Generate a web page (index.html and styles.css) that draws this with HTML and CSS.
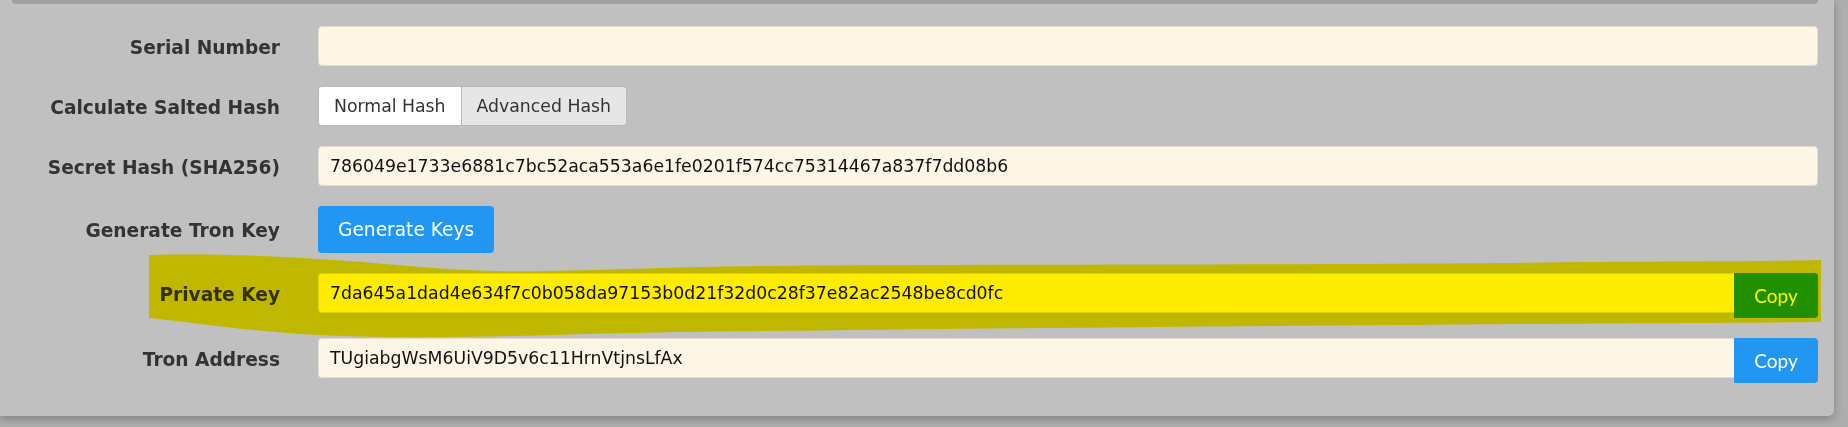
FILE: index.html
```html
<!DOCTYPE html>
<html lang="en">
<head>
  <meta charset="UTF-8" />
  <title>Tron Key Generator</title>
  <link rel="stylesheet" href="styles.css">
</head>
<body>
  <div class="panel">
    <div class="panel-top"></div>

    <div class="form">
      <label class="label">Serial Number</label>
      <input class="field" type="text" value="">

      <label class="label">Calculate Salted Hash</label>
      <div class="btn-group">
        <button class="seg active">Normal Hash</button>
        <button class="seg">Advanced Hash</button>
      </div>

      <label class="label">Secret Hash (SHA256)</label>
      <input class="field" type="text" value="786049e1733e6881c7bc52aca553a6e1fe0201f574cc75314467a837f7dd08b6">

      <label class="label label-btn">Generate Tron Key</label>
      <button class="btn-primary">Generate Keys</button>

      <label class="label">Private Key</label>
      <div class="input-group">
        <input class="field" type="text" value="7da645a1dad4e634f7c0b058da97153b0d21f32d0c28f37e82ac2548be8cd0fc">
        <button class="btn-copy">Copy</button>
      </div>

      <label class="label">Tron Address</label>
      <div class="input-group">
        <input class="field" type="text" value="TUgiabgWsM6UiV9D5v6c11HrnVtjnsLfAx">
        <button class="btn-copy">Copy</button>
      </div>
    </div>
  </div>

  <!-- marker highlight drawn over the private key row -->
  <svg class="marker" width="1848" height="427" viewBox="0 0 1848 427">
    <path d="M149,255 C240,253 320,258 420,267 C520,276 600,268 760,266 C1000,264 1300,265 1500,263 C1650,261 1740,262 1821,260 L1821,322 C1740,323 1600,323 1400,325 C1100,327 850,330 680,332 C520,335 420,341 300,334 C230,329 190,322 149,318 Z" />
  </svg>
</body>
</html>
```

FILE: styles.css
```css
body {
  margin: 0;
  background: #adadad;
  font-family: "DejaVu Sans", Verdana, sans-serif;
  height: 427px;
  overflow: hidden;
  position: relative;
}

.panel {
  width: 1834px;
  box-sizing: border-box;
  padding: 0 16px 33px 12px;
  background: #c0c0c0;
  border-radius: 0 0 6px 0;
  box-shadow: 0 3px 8px rgba(0, 0, 0, 0.25);
}

.panel-top {
  height: 4px;
  margin-bottom: 22px;
  background: #a0a0a0;
  border-radius: 0 0 6px 6px;
}

.form {
  display: grid;
  grid-template-columns: 268px 1fr;
  column-gap: 38px;
  row-gap: 20px;
  align-items: start;
}

.label {
  height: 40px;
  text-align: right;
  font-weight: bold;
  font-size: 18.6px;
  line-height: 43px;
  color: #333;
}

.label-btn {
  height: 47px;
  line-height: 49px;
}

.field {
  box-sizing: border-box;
  width: 100%;
  height: 40px;
  margin: 0;
  padding: 0 11px;
  font-family: "DejaVu Sans", Verdana, sans-serif;
  font-size: 17.3px;
  color: #111;
  background: #fdf6e7;
  border: 1px solid #e2dccf;
  border-radius: 4px;
  outline: none;
}

.btn-group {
  display: flex;
  justify-self: start;
  height: 40px;
  border: 1px solid #b8b8b8;
  border-radius: 4px;
  overflow: hidden;
  box-sizing: border-box;
}

.seg {
  margin: 0;
  padding: 0 15px;
  border: none;
  font-family: "DejaVu Sans", Verdana, sans-serif;
  font-size: 17.3px;
  color: #333;
  background: #e6e6e6;
}

.seg.active {
  background: #fff;
  border-right: 1px solid #b8b8b8;
}

.btn-primary {
  justify-self: start;
  height: 47px;
  margin: 0;
  padding: 0 20px;
  border: none;
  border-radius: 4px;
  background: #2196f3;
  color: #fff;
  font-family: "DejaVu Sans", Verdana, sans-serif;
  font-size: 18.6px;
}

.input-group {
  display: flex;
  align-items: flex-start;
}

.input-group .field {
  flex: 1;
  border-radius: 4px 0 0 4px;
  border-right: none;
}

.btn-copy {
  width: 84px;
  height: 45px;
  margin: 0;
  border: none;
  border-radius: 0 4px 4px 0;
  background: #2196f3;
  color: #fff;
  font-family: Lato, "Open Sans", sans-serif;
  font-size: 19px;
}

.marker {
  position: absolute;
  top: 0;
  left: 0;
  pointer-events: none;
  mix-blend-mode: multiply;
}

.marker path {
  fill: #fff400;
}
```
